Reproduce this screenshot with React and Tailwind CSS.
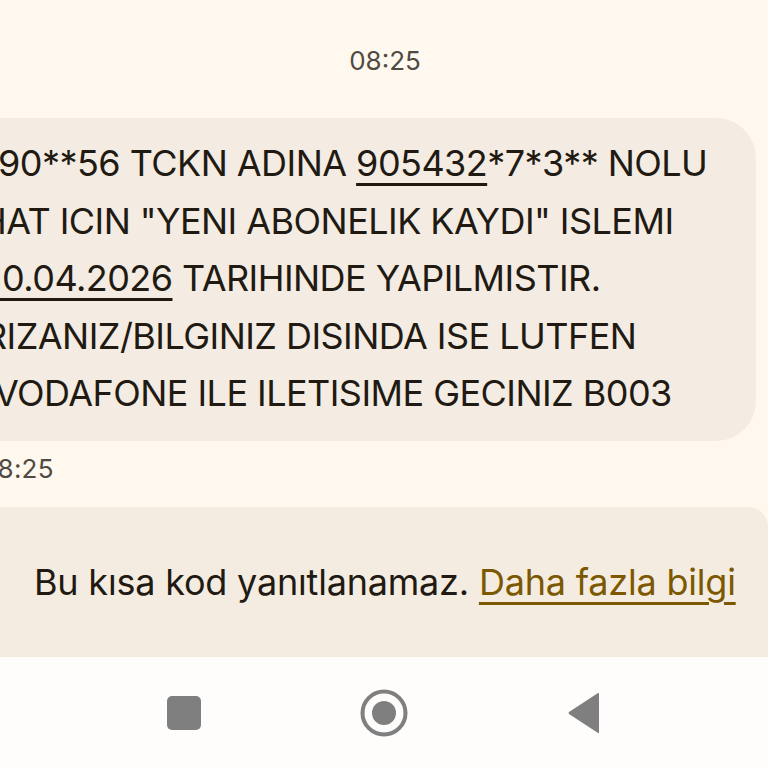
export default function App() {
  return (
    <div className="w-[768px] h-[768px] overflow-hidden flex flex-col bg-[#fff8ee] font-['Inter','Liberation_Sans',sans-serif]">
      <div className="h-[118px] pt-[44px] text-center text-[26px] leading-[34px] text-[#4f4a42] shrink-0 pl-[2px]">08:25</div>
      <div className="w-[796px] -ml-[40px] h-[323px] shrink-0 rounded-[40px] bg-[#f4ece2] pt-[17px] pl-[16px] text-[36px] leading-[57.5px] text-[#211a13] whitespace-nowrap tracking-[-0.55px]">
        <div className="ml-[8px]">190**56 TCKN ADINA <span className="underline underline-offset-[7px] decoration-[3px]">905432</span>*7*3** NOLU</div>
        <div className="ml-[4px]">HAT ICIN "YENI ABONELIK KAYDI" ISLEMI</div>
        <div className="ml-[12px]"><span className="underline underline-offset-[7px] decoration-[3px]">10.04.2026</span> TARIHINDE YAPILMISTIR.</div>
        <div className="ml-[8px]">RIZANIZ/BILGINIZ DISINDA ISE LUTFEN</div>
        <div className="ml-[18px]">VODAFONE ILE ILETISIME GECINIZ B003</div>
      </div>
      <div className="h-[66px] shrink-0 pt-[11px] text-[26px] leading-[34px] text-[#4f4a42] -ml-[19px] tracking-[0.2px]">08:25</div>
      <div className="w-[788px] -ml-[20px] h-[150px] shrink-0 rounded-t-[20px] bg-[#f5ece1] pl-[54px] pt-[52px] text-[36px] leading-[46px] text-[#211a13] whitespace-nowrap tracking-[-0.2px]">
        Bu kısa kod yanıtlanamaz. <a className="text-[#7c5800] underline underline-offset-[7px] decoration-[2.5px]">Daha fazla bilgi</a>
      </div>
      <div className="flex-1 bg-[#fffdfb] flex items-center pt-[1px] pl-[167px]">
        <svg width="34" height="34" viewBox="0 0 34 34" className="shrink-0"><rect width="34" height="34" rx="5" fill="#7f7f7f" /></svg>
        <svg width="48" height="48" viewBox="0 0 48 48" className="ml-[159px] shrink-0"><circle cx="24" cy="24" r="21.5" fill="none" stroke="#7f7f7f" strokeWidth="4" /><circle cx="24" cy="24" r="12" fill="#7f7f7f" /></svg>
        <svg width="34" height="42" viewBox="0 0 34 42" className="ml-[159px] shrink-0"><path d="M31 1 L2 20 Q1 21 2 22 L31 41 Q32 41.5 32 40 L32 2 Q32 .5 31 1 Z" fill="#7f7f7f" /></svg>
      </div>
    </div>
  );
}
